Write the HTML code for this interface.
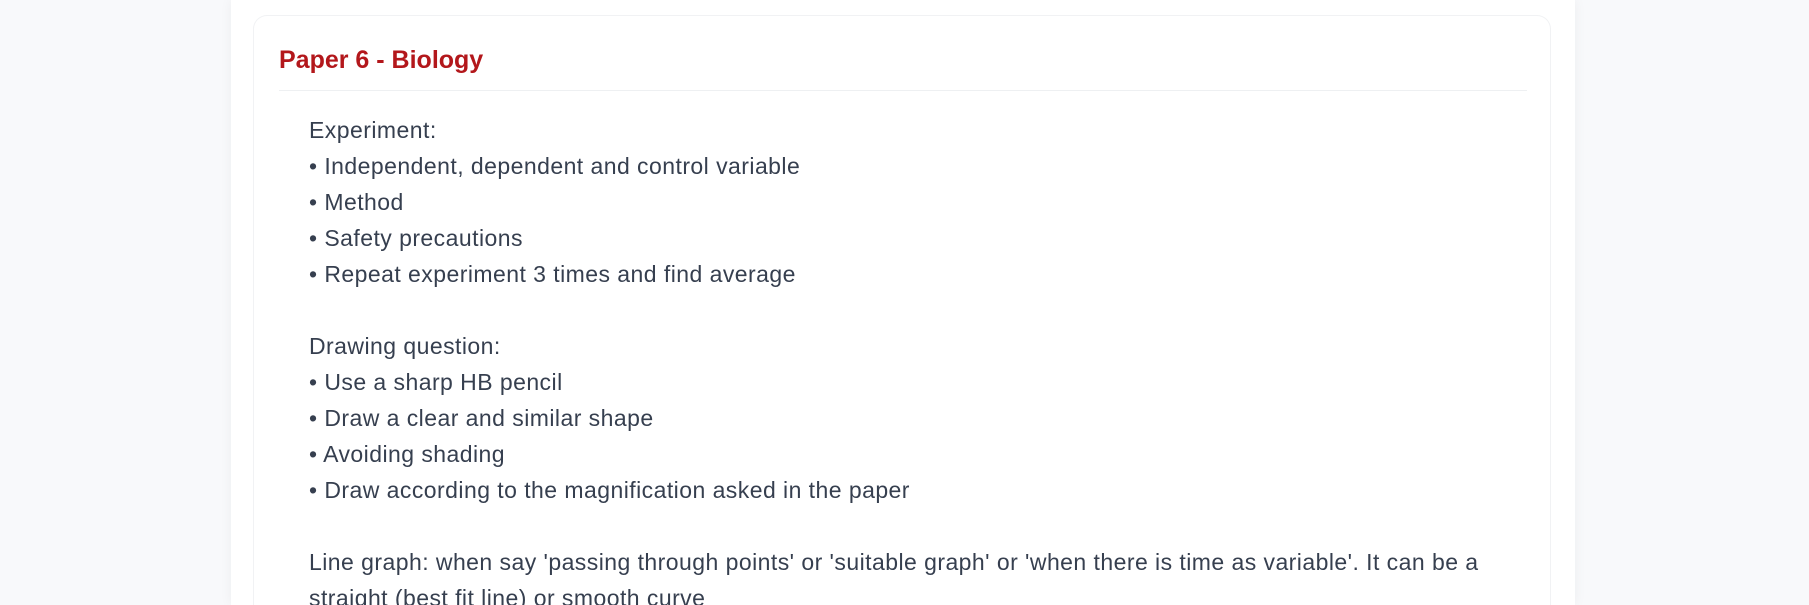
<!DOCTYPE html>
<html><head><meta charset="utf-8"><style>
html,body{margin:0;padding:0;width:1809px;height:605px;overflow:hidden;}
body{background:#f8f9fb;font-family:"Liberation Sans",sans-serif;position:relative;}
.wrap{position:absolute;left:231px;top:0;width:1344px;height:605px;background:#fff;box-shadow:0 0 12px rgba(0,0,0,0.05);}
.card{position:absolute;left:253px;top:15px;width:1296px;height:590px;border:1px solid #f1f2f4;border-bottom:none;border-radius:14px 14px 0 0;background:#fff;}
.title{position:absolute;left:279px;top:45px;font-size:25px;line-height:30px;color:#b3171b;font-weight:bold;white-space:nowrap;}
.hr{position:absolute;left:279px;top:90px;width:1248px;height:1px;background:#eef0f2;}
.txt{position:absolute;left:309px;top:112px;font-size:23px;letter-spacing:0.45px;line-height:36px;color:#363f4f;white-space:nowrap;height:493px;overflow:hidden;}
</style></head><body>
<div class="wrap"></div>
<div class="card"></div>
<div class="title">Paper 6 - Biology</div>
<div class="hr"></div>
<div class="txt">Experiment:<br>• Independent, dependent and control variable<br>• Method<br>• Safety precautions<br>• Repeat experiment 3 times and find average<br><br>Drawing question:<br>• Use a sharp HB pencil<br>• Draw a clear and similar shape<br>• Avoiding shading<br>• Draw according to the magnification asked in the paper<br><br>Line graph: when say 'passing through points' or 'suitable graph' or 'when there is time as variable'. It can be a<br>straight (best fit line) or smooth curve</div>
</body></html>
